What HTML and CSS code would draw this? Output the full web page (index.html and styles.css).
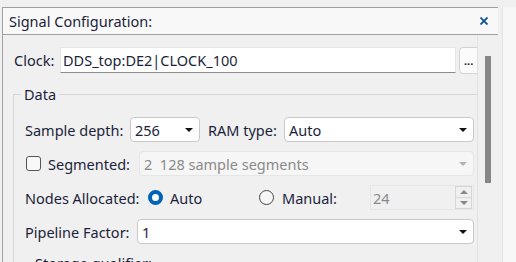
FILE: index.html
```html
<!DOCTYPE html>
<html lang="en">
<head>
  <meta charset="UTF-8">
  <title>Signal Configuration</title>
  <link rel="stylesheet" href="styles.css">
</head>
<body>

  <div class="window">
    <div class="panel">
      <div class="panel-head">
        <span class="title">Signal Configuration:</span>
        <svg class="close" width="8" height="8" viewBox="0 0 8 8">
          <path d="M0.5 0.5 L7.5 7.5 M7.5 0.5 L0.5 7.5" stroke="#0b4f8f" stroke-width="1.8" fill="none"/>
        </svg>
      </div>

      <div class="panel-body">
        <div class="content">
          <div class="clock-row">
            <span class="clock-label">Clock:</span>
            <div class="text-field">DDS_top:DE2|CLOCK_100</div>
            <button class="browse">...</button>
          </div>

          <fieldset class="group">
            <legend>Data</legend>

            <div class="row">
              <span class="lbl w-depth">Sample depth:</span>
              <div class="combo w-small"><span>256</span><span class="arrow"></span></div>
              <span class="lbl w-ram">RAM type:</span>
              <div class="combo grow"><span>Auto</span><span class="arrow"></span></div>
            </div>

            <div class="row">
              <span class="checkbox"></span>
              <span class="lbl w-seg">Segmented:</span>
              <div class="combo grow disabled"><span>2&nbsp;&nbsp;128 sample segments</span><span class="arrow"></span></div>
            </div>

            <div class="row">
              <span class="lbl w-nodes">Nodes Allocated:</span>
              <span class="radio checked"></span>
              <span class="lbl w-auto">Auto</span>
              <span class="radio"></span>
              <span class="lbl w-manual">Manual:</span>
              <div class="spin">
                <span>24</span>
                <div class="spin-btns">
                  <span class="spin-up"></span>
                  <span class="spin-down"></span>
                </div>
              </div>
            </div>

            <div class="row">
              <span class="lbl w-pipe">Pipeline Factor:</span>
              <div class="combo grow"><span>1</span><span class="arrow"></span></div>
            </div>

            <fieldset class="group inner">
              <legend>Storage qualifier:</legend>
            </fieldset>
          </fieldset>
        </div>

        <div class="scrollbar">
          <div class="thumb"></div>
        </div>
      </div>
    </div>
    <div class="edge"></div>
  </div>

</body>
</html>
```

FILE: styles.css
```css
body {
  margin: 0;
  font-family: 'Noto Sans', sans-serif;
  font-size: 14.5px;
  color: #1b1f3b;
  background: #f0f0f0;
  overflow: hidden;
}

.window {
  display: flex;
  height: 262px;
  padding: 7px 0 0 2px;
  box-sizing: border-box;
}

.panel {
  width: 496px;
  flex: none;
  border-left: 1px solid #a0a0a0;
  border-top: 1px solid #a0a0a0;
  box-sizing: border-box;
  display: flex;
  flex-direction: column;
}

.panel-head {
  height: 26px;
  flex: none;
  display: flex;
  align-items: center;
  justify-content: space-between;
  padding: 0 10px 0 6px;
  background: #f8f8f8;
  border-bottom: 1px solid #a0a0a0;
}

.panel-body {
  flex: 1;
  min-height: 0;
  display: flex;
}

.content {
  flex: 1;
  min-width: 0;
  overflow: hidden;
  padding: 12px 0 0 11px;
}

.scrollbar {
  width: 20px;
  flex: none;
  border-left: 1px solid #e2e2e2;
  padding-top: 21px;
  display: flex;
  justify-content: center;
}

.thumb {
  width: 6px;
  height: 127px;
  background: #878787;
}

.edge {
  flex: 1;
  margin-left: 4px;
  border-left: 1px solid #e4e4e4;
  background: #f7f7f7;
}

/* clock row */
.clock-row {
  display: flex;
  align-items: center;
  height: 26px;
}

.clock-label {
  width: 46px;
  flex: none;
}

.text-field {
  width: 396px;
  height: 26px;
  flex: none;
  box-sizing: border-box;
  padding-left: 2px;
  line-height: 24px;
  background: #fff;
  border: 1px solid #e6e6e6;
  border-bottom-color: #8c8c8c;
}

.browse {
  width: 26px;
  height: 27px;
  flex: none;
  margin-left: 3px;
  padding: 0 0 0 4px;
  text-align: left;
  font-family: 'Noto Sans', sans-serif;
  font-size: 11px;
  font-weight: bold;
  color: #222;
  background: #fbfbfb;
  border: 1px solid #d2d2d2;
  border-radius: 4px;
}

/* group box */
.group {
  margin: 11px -10px 0 -1px;
  padding: 13px 12px 0 11px;
  border: 1px solid #d6d6d6;
  border-bottom: none;
}

.group legend {
  margin-left: -4px;
  padding: 0 3px;
  line-height: 20px;
}

.group.inner {
  margin: 9px 0 0 0;
  padding: 0 0 0 10px;
  border-color: transparent;
}

.row {
  display: flex;
  align-items: center;
  height: 25px;
  margin-bottom: 9px;
}

.lbl {
  flex: none;
}

.w-depth { width: 105px; }
.w-ram { width: 76px; margin-left: 8px; }
.w-seg { width: 91px; }
.w-nodes { width: 123px; }
.w-auto { width: 89px; margin-left: 7px; }
.w-manual { width: 88px; margin-left: 8px; }
.w-pipe { width: 112px; }

.combo {
  height: 25px;
  box-sizing: border-box;
  display: flex;
  align-items: center;
  justify-content: space-between;
  padding: 0 6px 0 4px;
  background: #fff;
  border: 1px solid #c9c9c9;
  border-radius: 4px;
}

.w-small {
  width: 70px;
  flex: none;
}

.grow {
  flex: 1;
}

.arrow {
  width: 0;
  height: 0;
  border-left: 4px solid transparent;
  border-right: 4px solid transparent;
  border-top: 4px solid #111;
}

.combo.disabled {
  background: #f6f6f6;
  border-color: #e6e6e6;
  color: #8a8a8a;
}

.combo.disabled .arrow {
  border-top-color: #b4b4b4;
}

.checkbox {
  width: 15px;
  height: 15px;
  flex: none;
  box-sizing: border-box;
  margin: 0 7px 0 1px;
  background: #f8f8f8;
  border: 1px solid #555;
  border-radius: 3px;
}

.radio {
  width: 15px;
  height: 15px;
  flex: none;
  box-sizing: border-box;
  border: 1px solid #444;
  border-radius: 50%;
  background: #f6f6f6;
}

.radio.checked {
  border: 4px solid #0062b8;
  background: #fff;
}

.spin {
  width: 104px;
  height: 25px;
  flex: none;
  box-sizing: border-box;
  display: flex;
  align-items: center;
  justify-content: space-between;
  padding: 0 1px 0 2px;
  color: #8a8a8a;
  border: 1px solid #e6e6e6;
}

.spin-btns {
  width: 17px;
  display: flex;
  flex-direction: column;
}

.spin-up,
.spin-down {
  height: 10px;
  border: 1px solid #d6d6d6;
  display: flex;
  align-items: center;
  justify-content: center;
}

.spin-down {
  border-top: none;
}

.spin-up::after,
.spin-down::after {
  content: '';
  border-left: 4px solid transparent;
  border-right: 4px solid transparent;
}

.spin-up::after {
  border-bottom: 4px solid #888;
}

.spin-down::after {
  border-top: 4px solid #888;
}
```
